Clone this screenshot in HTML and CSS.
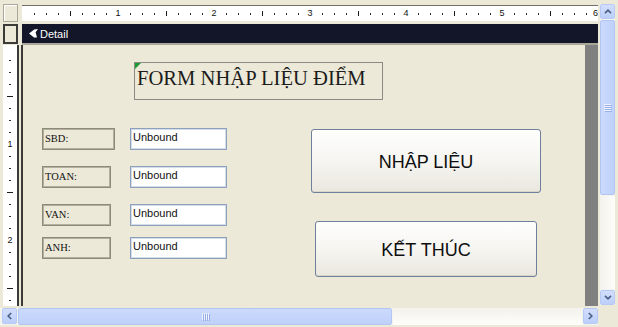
FILE: index.html
```html
<!DOCTYPE html>
<html lang="vi">
<head>
<meta charset="utf-8">
<title>Form Design</title>
<link rel="stylesheet" href="styles.css">
</head>
<body>
<div class="app">
  <div class="main">
    <div class="designer">
      <div class="ruler-row">
        <div class="corner corner-top"></div>
        <div class="hruler">
          <span class="c"><i class="d"></i></span><span class="c"><i class="d"></i></span><span class="c"><i class="d"></i></span><span class="c"><i class="h"></i></span><span class="c"><i class="d"></i></span><span class="c"><i class="d"></i></span><span class="c"><i class="d"></i></span><span class="c"><b class="n">1</b></span>
          <span class="c"><i class="d"></i></span><span class="c"><i class="d"></i></span><span class="c"><i class="d"></i></span><span class="c"><i class="h"></i></span><span class="c"><i class="d"></i></span><span class="c"><i class="d"></i></span><span class="c"><i class="d"></i></span><span class="c"><b class="n">2</b></span>
          <span class="c"><i class="d"></i></span><span class="c"><i class="d"></i></span><span class="c"><i class="d"></i></span><span class="c"><i class="h"></i></span><span class="c"><i class="d"></i></span><span class="c"><i class="d"></i></span><span class="c"><i class="d"></i></span><span class="c"><b class="n">3</b></span>
          <span class="c"><i class="d"></i></span><span class="c"><i class="d"></i></span><span class="c"><i class="d"></i></span><span class="c"><i class="h"></i></span><span class="c"><i class="d"></i></span><span class="c"><i class="d"></i></span><span class="c"><i class="d"></i></span><span class="c"><b class="n">4</b></span>
          <span class="c"><i class="d"></i></span><span class="c"><i class="d"></i></span><span class="c"><i class="d"></i></span><span class="c"><i class="h"></i></span><span class="c"><i class="d"></i></span><span class="c"><i class="d"></i></span><span class="c"><i class="d"></i></span><span class="c"><b class="n">5</b></span>
          <span class="c"><i class="d"></i></span><span class="c"><i class="d"></i></span><span class="c"><i class="d"></i></span><span class="c"><i class="h"></i></span><span class="c"><i class="d"></i></span><span class="c"><i class="d"></i></span><span class="c"><i class="d"></i></span><span class="c c-last"><b class="n">6</b></span>
        </div>
      </div>
      <div class="section-row">
        <div class="corner corner-section"></div>
        <div class="section-bar">
          <svg class="sec-icon" width="9" height="9" viewBox="0 0 9 9"><path d="M0 4.6 L5.2 0.6 L9 0 L6.6 3.2 L8 8.6 L5 8.6 Z" fill="#ffffff"/></svg>
          <span class="sec-title">Detail</span>
        </div>
      </div>
      <div class="body-row">
        <div class="vruler">
          <span class="vc"><i class="vd"></i></span><span class="vc"><i class="vd"></i></span><span class="vc"><i class="vd"></i></span><span class="vc"><i class="vh"></i></span><span class="vc"><i class="vd"></i></span><span class="vc"><i class="vd"></i></span><span class="vc"><i class="vd"></i></span><span class="vc"><b class="n">1</b></span>
          <span class="vc"><i class="vd"></i></span><span class="vc"><i class="vd"></i></span><span class="vc"><i class="vd"></i></span><span class="vc"><i class="vh"></i></span><span class="vc"><i class="vd"></i></span><span class="vc"><i class="vd"></i></span><span class="vc"><i class="vd"></i></span><span class="vc"><b class="n">2</b></span>
          <span class="vc"><i class="vd"></i></span><span class="vc"><i class="vd"></i></span><span class="vc"><i class="vd"></i></span><span class="vc"><i class="vh"></i></span><span class="vc"><i class="vd"></i></span>
        </div>
        <div class="canvas">
          <div class="title-box">FORM NHẬP LIỆU ĐIỂM</div>
          <div class="form-row">
            <div class="fields">
              <div class="lbl lbl-wide">SBD:</div><div class="tb">Unbound</div>
              <div class="lbl">TOAN:</div><div class="tb">Unbound</div>
              <div class="lbl">VAN:</div><div class="tb">Unbound</div>
              <div class="lbl">ANH:</div><div class="tb">Unbound</div>
            </div>
            <div class="buttons">
              <div class="btn btn-nhap">NHẬP LIỆU</div>
              <div class="btn btn-ket">KẾT THÚC</div>
            </div>
          </div>
        </div>
        <div class="gray-strip"></div>
      </div>
    </div>
    <div class="vscroll">
      <div class="sb-btn"><svg width="8" height="5" viewBox="0 0 8 5"><path d="M1 4.2 L4 1.2 L7 4.2" stroke="#4d6185" stroke-width="1.7" fill="none"/></svg></div>
      <div class="vthumb"><span class="grip-v"><i></i><i></i><i></i><i></i></span></div>
      <div class="vtrack"></div>
      <div class="sb-btn"><svg width="8" height="5" viewBox="0 0 8 5"><path d="M1 0.8 L4 3.8 L7 0.8" stroke="#4d6185" stroke-width="1.7" fill="none"/></svg></div>
    </div>
  </div>
  <div class="hscroll-row">
    <div class="hscroll">
      <div class="sb-btn sb-btn-h"><svg width="5" height="8" viewBox="0 0 5 8"><path d="M4.2 1 L1.2 4 L4.2 7" stroke="#4d6185" stroke-width="1.7" fill="none"/></svg></div>
      <div class="hthumb"><span class="grip-h"><i></i><i></i><i></i><i></i></span></div>
      <div class="htrack"></div>
      <div class="sb-btn sb-btn-h"><svg width="5" height="8" viewBox="0 0 5 8"><path d="M0.8 1 L3.8 4 L0.8 7" stroke="#4d6185" stroke-width="1.7" fill="none"/></svg></div>
    </div>
    <div class="sb-corner"></div>
  </div>
</div>
</body>
</html>
```

FILE: styles.css
```css
* { box-sizing: border-box; }
html, body { margin: 0; padding: 0; }
body {
  width: 618px;
  height: 327px;
  overflow: hidden;
  background: #ece9d8;
  font-family: "Liberation Sans", Arial, sans-serif;
}
i, b { display: block; font-style: normal; }

.app { width: 618px; height: 327px; display: flex; flex-direction: column; }
.main { display: flex; height: 306px; }
.designer { width: 598px; padding-top: 4px; display: flex; flex-direction: column; }

/* ruler row */
.ruler-row { display: flex; height: 20px; }
.corner { width: 15px; margin-left: 3px; background: #ece9d8; }
.corner-top { height: 18px; border: 1px solid #aca899; box-shadow: inset 1px 1px 0 #ffffff; }
.hruler {
  margin-left: 4px;
  margin-top: 1px;
  flex: 1;
  height: 16px;
  background: #ffffff;
  border-top: 1px solid #716f64;
  display: flex;
  padding-left: 6px;
  overflow: hidden;
}
.c { flex: 0 0 12px; width: 12px; display: flex; align-items: center; justify-content: center; }
.c-last { flex: 0 0 6px; width: 6px; justify-content: flex-end; }
.d { width: 1px; height: 2px; background: #2a2a2a; }
.h { width: 1px; height: 5px; background: #1a1a1a; }
.n { font-family: "Liberation Sans", Arial, sans-serif; font-size: 9px; font-weight: normal; line-height: 9px; color: #111; }

/* section bar */
.section-row { display: flex; height: 21px; }
.corner-section { height: 20px; border: 2px solid #3b3a36; }
.section-bar {
  margin-left: 4px;
  flex: 1;
  height: 21px;
  background: #121628;
  border-bottom: 2px solid #a9a797;
  display: flex;
  align-items: center;
  padding-left: 7px;
  gap: 2px;
}
.sec-icon { display: block; }
.sec-title { color: #ffffff; font-size: 11px; line-height: 13px; padding-top: 1px; }

/* body */
.body-row { display: flex; flex: 1; min-height: 0; }
.vruler {
  margin-left: 3px;
  width: 16px;
  background: #ffffff;
  border-right: 2px solid #3b3a36;
  padding-top: 9px;
  display: flex;
  flex-direction: column;
  overflow: hidden;
}
.vc { flex: 0 0 12px; height: 12px; display: flex; align-items: center; justify-content: center; }
.vd { width: 2px; height: 1px; background: #2a2a2a; }
.vh { width: 6px; height: 1px; background: #1a1a1a; }

.canvas {
  margin-left: 2px;
  border-left: 2px solid #3b3a36;
  flex: 1;
  background: #ece9d8;
  padding-top: 17px;
  padding-left: 111px;
}
.gray-strip { width: 13px; background: #808080; }

.title-box {
  position: relative;
  width: 249px;
  height: 38px;
  border: 1px solid #8c8a84;
  font-family: "Liberation Serif", "Times New Roman", serif;
  font-size: 20.6px;
  line-height: 24px;
  color: #1c1c1c;
  padding: 3px 0 0 2px;
  white-space: nowrap;
}
.title-box::before {
  content: "";
  position: absolute;
  top: 0;
  left: 0;
  border-top: 6px solid #1e9a32;
  border-right: 6px solid transparent;
}

.form-row { display: flex; margin-top: 28px; margin-left: -92px; }
.fields {
  display: grid;
  grid-template-columns: 88px 97px;
  grid-template-rows: 38px 38px 33px 22px;
  align-items: start;
}
.lbl {
  width: 69px;
  height: 22px;
  border: 1px solid #8e8a78;
  box-shadow: inset 0 0 0 1px #b3af9e;
  font-family: "Liberation Serif", "Times New Roman", serif;
  font-size: 10.5px;
  color: #111;
  display: flex;
  align-items: center;
  padding-left: 2px;
  padding-bottom: 1px;
}
.lbl-wide { width: 73px; }
.tb {
  width: 97px;
  height: 22px;
  background: #ffffff;
  border: 1px solid #8ea1bc;
  box-shadow: inset 0 0 0 1px #d4dce8;
  font-size: 11px;
  line-height: 13px;
  color: #111;
  padding: 2px 0 0 2px;
}

.buttons {
  margin-left: 84px;
  width: 230px;
  display: flex;
  flex-direction: column;
  align-items: center;
}
.btn {
  display: flex;
  align-items: center;
  justify-content: center;
  border: 1px solid #6f809a;
  border-radius: 3px;
  background: linear-gradient(#fefefd, #f6f5f1 50%, #e9e7de);
  box-shadow: inset 0 -1px 0 #d9d6c9;
  font-size: 18px;
  color: #0e0e0e;
}
.btn-nhap { width: 230px; height: 64px; margin-top: 1px; padding-top: 2px; }
.btn-ket { width: 222px; height: 56px; margin-top: 28px; padding-top: 3px; }

/* scrollbars */
.vscroll {
  width: 15px;
  margin: 4px 0 1px 2px;
  display: flex;
  flex-direction: column;
  gap: 1px;
  background: #f4f4ef;
}
.sb-btn {
  width: 15px;
  height: 15px;
  background: linear-gradient(#d3defc, #bccffa);
  border: 1px solid #b7caf5;
  border-radius: 2px;
  display: flex;
  align-items: center;
  justify-content: center;
}
.sb-btn svg { display: block; }
.vthumb {
  height: 175px;
  background: linear-gradient(90deg, #cbd9fc, #bfd1fa);
  border: 1px solid #b2c6f4;
  border-radius: 2px;
  display: flex;
  align-items: center;
  justify-content: center;
}
.grip-v { display: flex; flex-direction: column; gap: 1px; }
.grip-v i { width: 7px; height: 1px; background: #eef3fe; box-shadow: 1px 1px 0 #97aee6; }
.vtrack { flex: 1; background: linear-gradient(90deg, #f3f2ec, #fdfdfa); }

.hscroll-row { display: flex; height: 21px; padding-top: 2px; }
.hscroll {
  width: 598px;
  height: 17px;
  display: flex;
  gap: 1px;
  padding-left: 2px;
  background: #f4f4ef;
}
.sb-btn-h { width: 15px; height: 16px; }
.hthumb {
  width: 374px;
  background: linear-gradient(#cbd9fc, #bfd1fa);
  border: 1px solid #b2c6f4;
  border-radius: 2px;
  display: flex;
  align-items: center;
  justify-content: center;
}
.grip-h { display: flex; gap: 1px; }
.grip-h i { width: 1px; height: 7px; background: #eef3fe; box-shadow: 1px 1px 0 #97aee6; }
.htrack { flex: 1; background: linear-gradient(#f3f2ec, #fdfdfa); }
.sb-corner { flex: 1; background: #ece9d8; }
```
